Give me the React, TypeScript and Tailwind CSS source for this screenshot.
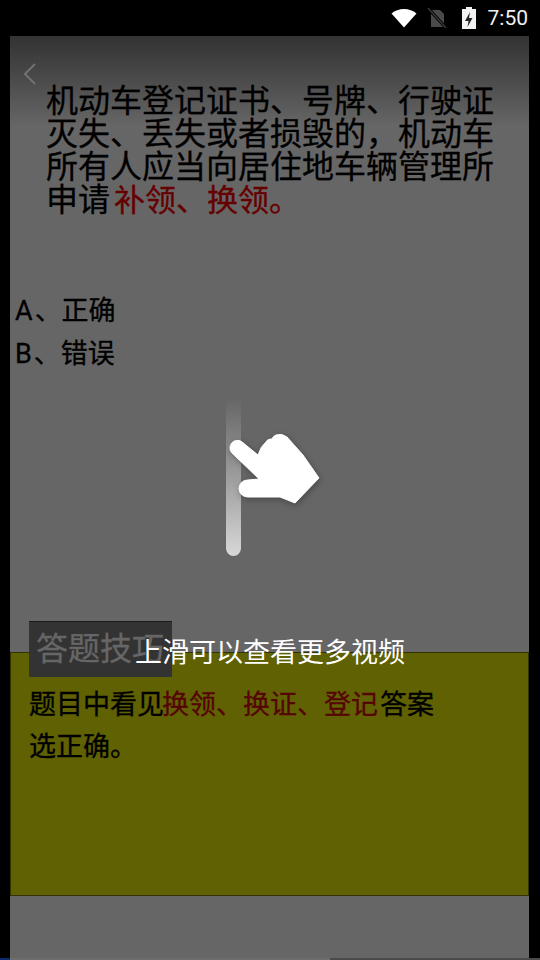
import React from "react";

const cjk = "font-['Roboto','Noto_Sans_CJK_SC',sans-serif]";

function StatusBar() {
  return (
    <div className="h-9 flex items-center justify-end pr-3 text-white">
      <svg width="26" height="20" viewBox="0 0 26 20" className="mr-[10px]">
        <path d="M0.5 5.5C4 2.5 8 1 13 1s9 1.500 12.500 4.500L13 19.500z" fill="#fff" />
      </svg>
      <svg width="20" height="22" viewBox="0 0 20 22" className="mr-[14px]">
        <path d="M4 3h9l4 4v13H4z" fill="#4a4a4a" />
        <path d="M1 1l18 20" stroke="#000" strokeWidth="3" />
        <path d="M1 1l18 20" stroke="#3c3c3c" strokeWidth="1.200" />
      </svg>
      <svg width="16" height="24" viewBox="0 0 16 24" className="mr-[11px]">
        <path d="M5 1h6v2h4v20H1V3h4z" fill="#f2f2f2" />
        <path d="M9 6l-5 9h3.500l-1 6 5-9H8z" fill="#222" />
      </svg>
      <span className="text-[21px] font-['Roboto',sans-serif] text-[#f0f0f0] leading-none">7:50</span>
    </div>
  );
}

function Hand() {
  return (
    <svg width="100" height="90" viewBox="0 0 100 90" className="absolute left-[226px] top-[430px] drop-shadow-[1px_2px_3px_rgba(0,0,0,0.3)]">
      <path
        d="M33 49L21.500 50A8.500 8.500 0 0 0 21.500 67L54 67L69 73L93 48L77 25L61 7Q56 3 50 5Q47 6 46 9Q42 8 39 13Q35 16 32 25L15.600 11.600A7.500 7.500 0 0 0 6 23Z"
        fill="#fff"
        stroke="#fff"
        strokeLinejoin="round"
      />
    </svg>
  );
}

export default function App() {
  return (
    <div className={`relative w-[540px] h-[960px] bg-black overflow-hidden ${cjk}`}>
      <StatusBar />
      <div className="ml-[10px] w-[519px] h-[922px] bg-[#666666] relative flex flex-col">
        <div className="h-[90px] -mb-[90px] bg-gradient-to-b from-[#333333] to-[#666666]" />
        <svg width="16" height="24" viewBox="0 0 16 24" className="absolute left-[12px] top-[26px]">
          <path d="M13 2L3 12l10 10" fill="none" stroke="#727272" strokeWidth="2" />
        </svg>
        <p className="relative ml-[36px] mt-[49px] w-[450px] text-[32px] leading-[33px] text-black [-webkit-text-stroke:0.3px]">
          机动车登记证书、号牌、行驶证灭失、丢失或者损毁的，机动车所有人应当向居住地车辆管理所申请<span className="ml-[4px] text-[31px] text-[#650000]">补领、换领。</span>
        </p>
        <div className="ml-[5px] mt-[73px] text-[27px] leading-[43px] text-black [-webkit-text-stroke:0.3px]">
          <div>
            <span className="mr-[2px]">A</span>、正确
          </div>
          <div>
            <span className="mr-[2px]">B</span>、错误
          </div>
        </div>
        <div className="relative mt-[276px] h-[244px] border border-[#333300] bg-[#5f6102] pl-[18px] pt-[31px]">
          <div className="absolute left-[18px] -top-[32px] w-[143px] h-[56px] bg-[#333333] border-t border-[#1a1a1a] flex items-center pl-[7px] pb-[1px] text-[32px] text-[#666666] [-webkit-text-stroke:0.3px]">
            答题技巧
          </div>
          <p className="w-[410px] text-[27px] leading-[42px] text-black [-webkit-text-stroke:0.3px]">
            题目中看见<span className="-ml-[2px] mr-[2px] text-[#560505]">换领、换证、登记</span>答案选正确。
          </p>
        </div>
      </div>
      <div className="absolute left-0 bottom-0 w-[540px] h-[2px] flex">
        <div className="w-[10px] bg-[#0a2a6b]" />
        <div className="w-[320px] bg-[#6e6e6e]" />
        <div className="flex-1 bg-[#4a4a4a]" />
      </div>
      <div className="absolute left-[226px] top-[398px] w-[15px] h-[158px] rounded-b-full bg-gradient-to-b from-[#666666] to-[#d8d8d8]" />
      <Hand />
      <div className="absolute left-[135px] top-[633px] text-[27px] leading-[40px] text-white whitespace-nowrap">
        上滑可以查看更多视频
      </div>
    </div>
  );
}
